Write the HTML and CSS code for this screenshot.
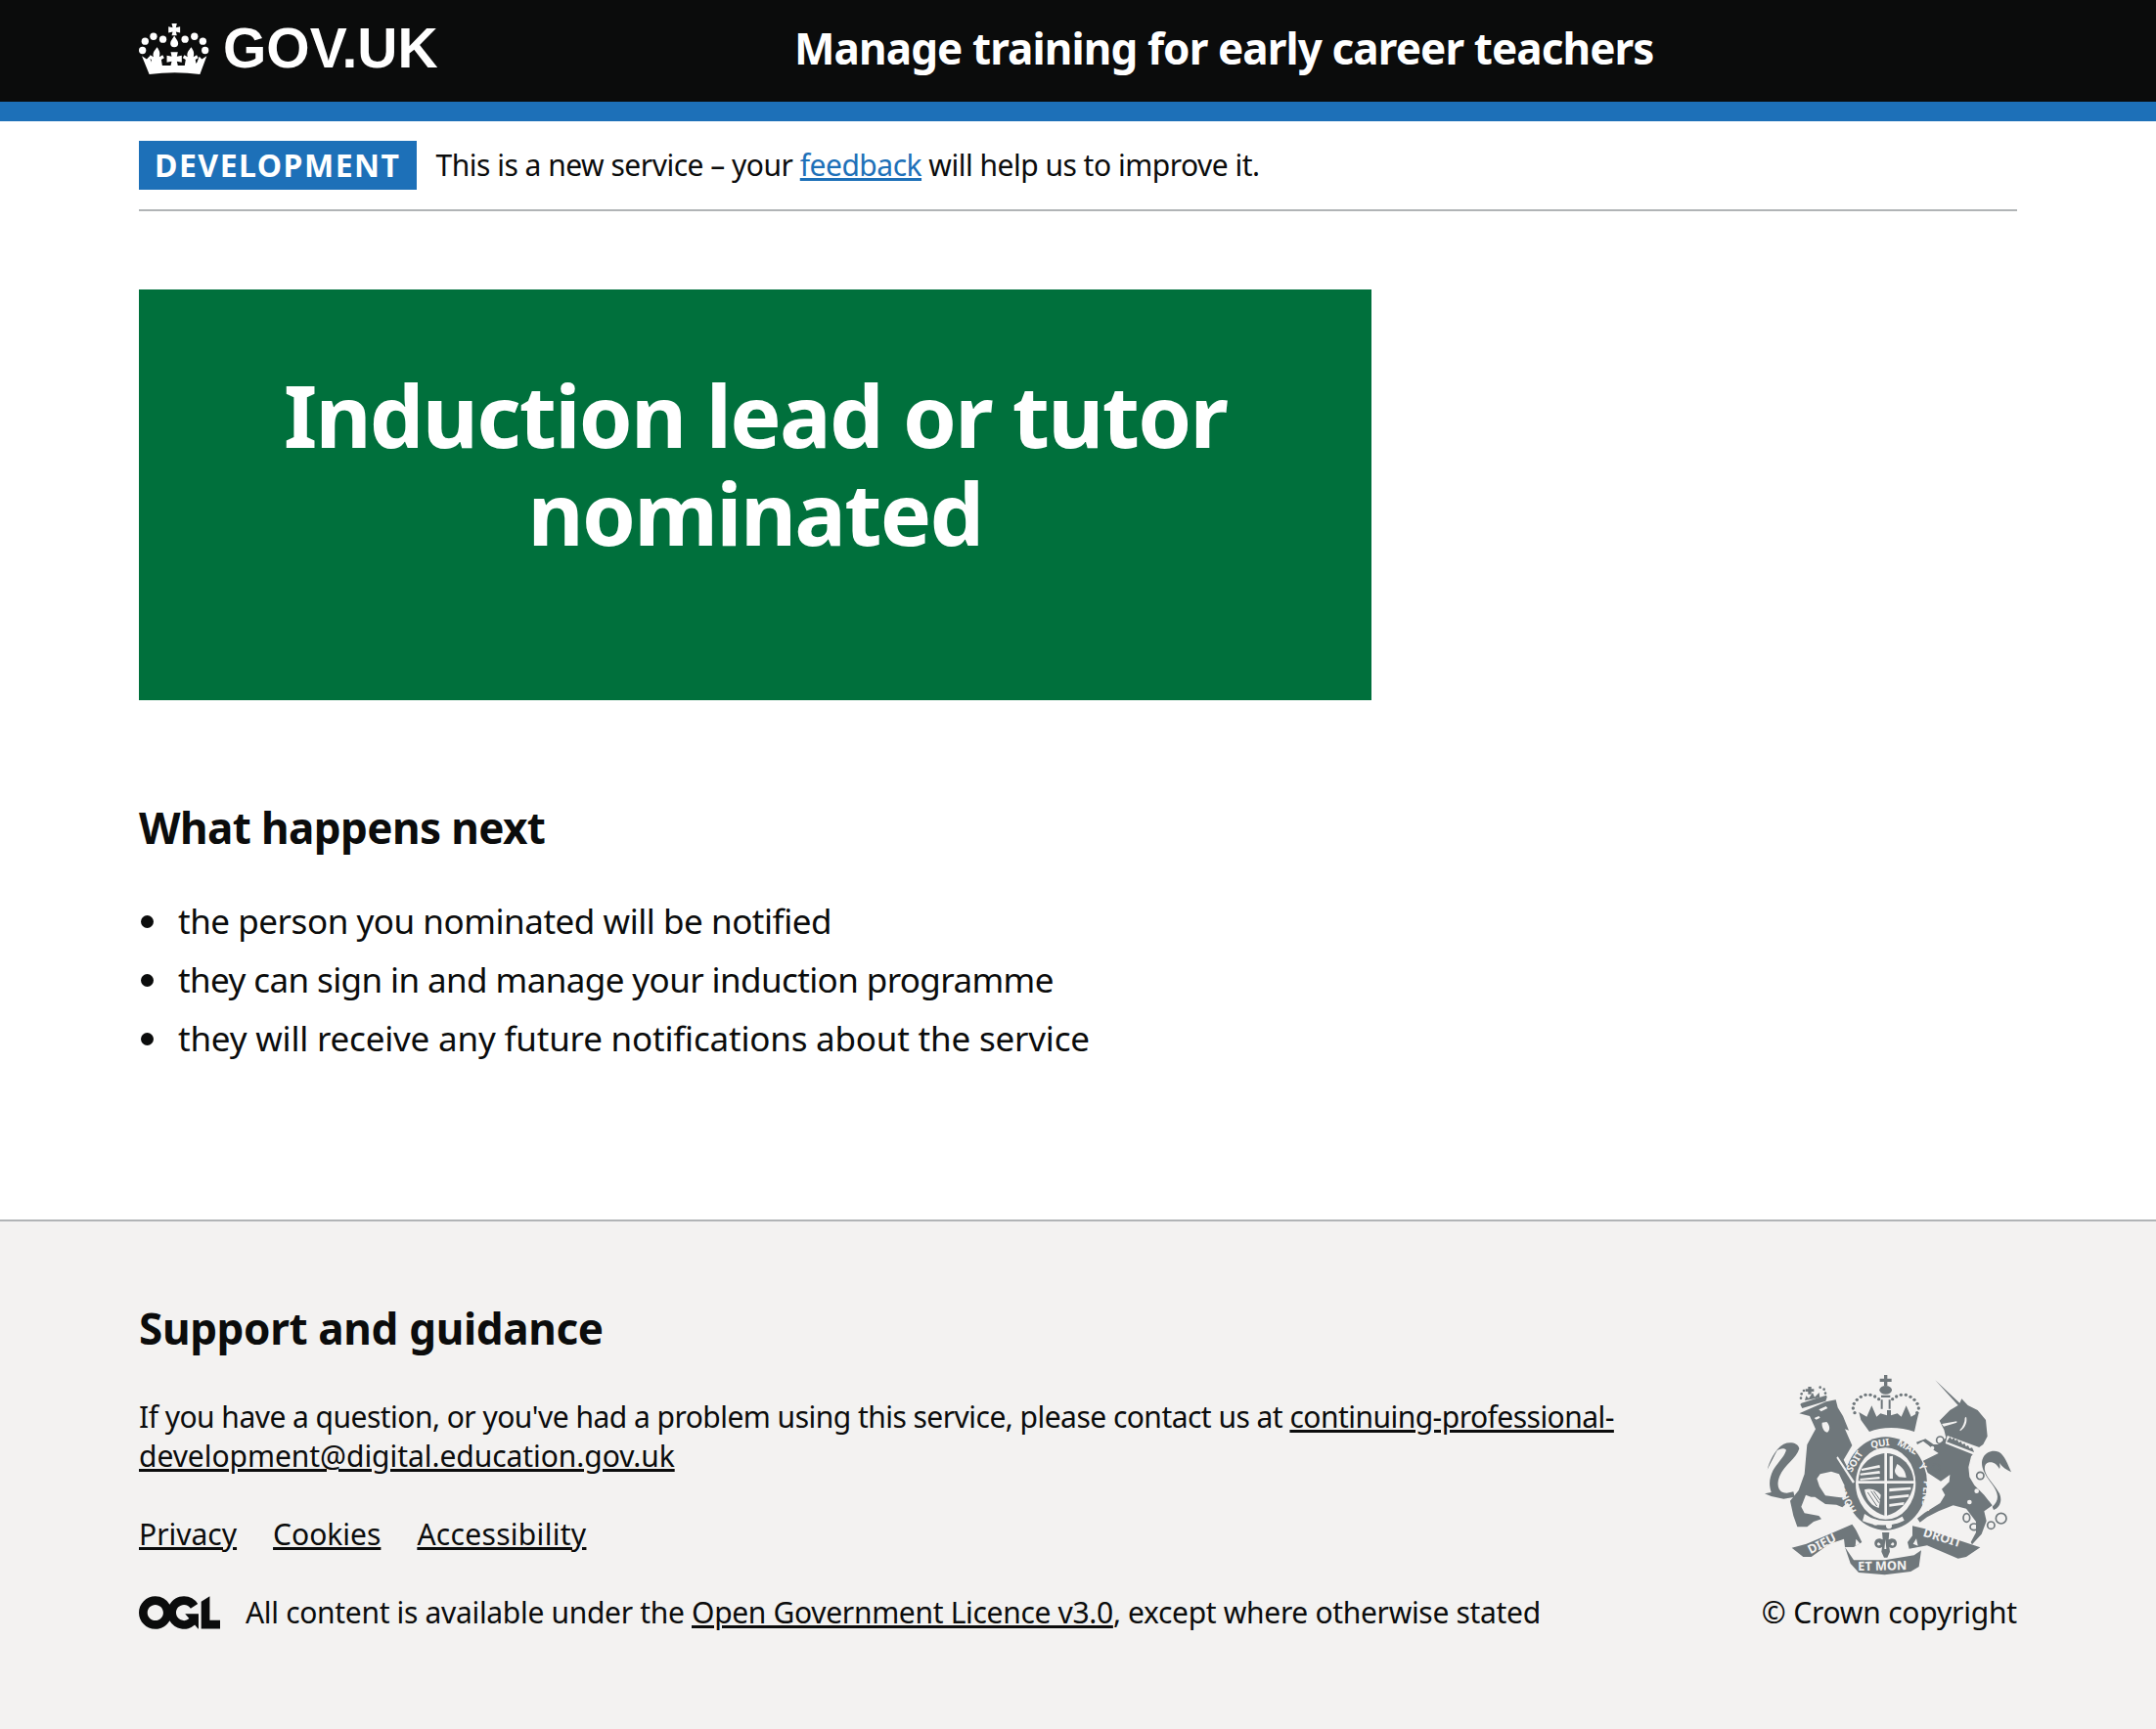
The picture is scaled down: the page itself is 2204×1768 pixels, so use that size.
FILE: index.html
```html
<!DOCTYPE html>
<html lang="en">
<head>
<meta charset="utf-8">
<title>Induction lead or tutor nominated</title>
<link rel="stylesheet" href="styles.css">
</head>
<body>
<header class="site-header">
  <div class="container header-row">
    <a class="logo" href="#">
      <svg class="crown" viewBox="36 35 220 170" aria-hidden="true">
        <defs>
          <path id="fleur" d="M92 113c6 9 11 16 7 30l10-6 5 9-9 6 3 18H72l3-18-9-6 5-9 10 6c-4-14 5-21 11-30z"/>
        </defs>
        <g fill="#fff">
          <circle cx="47" cy="123" r="11"/><circle cx="55" cy="95" r="11"/><circle cx="81" cy="80" r="11"/><circle cx="110" cy="89" r="11"/>
          <circle cx="178" cy="89" r="11"/><circle cx="207" cy="80" r="11"/><circle cx="233" cy="95" r="11"/><circle cx="240" cy="123" r="11"/>
          <path d="M137 40h16l-3 13 13-3v19l-13-3 3 11h-16l3-11-13 3V50l13 3z"/>
          <path d="M145 78c4 9 12 15 12 23a12 12 0 0 1-24 0c0-8 8-14 12-23z"/>
          <path d="M45 140l15 10 8-8 7 18 10 10h120l10-10 7-18 8 8 15-10-21 57q-77-11-156 0z"/>
          <use href="#fleur"/>
          <use href="#fleur" x="105"/>
          <path d="M134 128h22l-3 14 15-3v21l-15-3 3 13h-22l3-13-15 3v-21l15 3z"/>
        </g>
      </svg>
      <span class="logo-text">GOV.UK</span>
    </a>
    <a class="service-name" href="#">Manage training for early career teachers</a>
  </div>
</header>

<div class="container">
  <div class="phase-banner">
    <strong class="phase-tag">DEVELOPMENT</strong>
    <span class="phase-text">This is a new service – your <a class="link-blue" href="#">feedback</a> will help us to improve it.</span>
  </div>

  <main class="main">
    <div class="panel">
      <h1 class="panel-title">Induction lead or tutor nominated</h1>
    </div>
    <h2 class="heading-next">What happens next</h2>
    <ul class="next-list">
      <li>the person you nominated will be notified</li>
      <li>they can sign in and manage your induction programme</li>
      <li>they will receive any future notifications about the service</li>
    </ul>
  </main>
</div>

<footer class="site-footer">
  <div class="container footer-row">
    <div class="footer-main">
      <h2 class="footer-heading">Support and guidance</h2>
      <p class="footer-text">If you have a question, or you've had a problem using this service, please contact us at <a class="link-dark" href="#">continuing-professional-<span class="email-tail">development@digital.education.gov.uk</span></a></p>
      <ul class="footer-links">
        <li><a class="link-dark" href="#">Privacy</a></li>
        <li><a class="link-dark" href="#">Cookies</a></li>
        <li><a class="link-dark" href="#">Accessibility</a></li>
      </ul>
      <div class="licence">
        <svg class="ogl" viewBox="0 0 483.2 195.7" aria-hidden="true"><path fill="currentColor" d="M421.5 142.8V.1l-50.7 32.3v161.1h112.4v-50.7zm-122.3-9.6A47.12 47.12 0 0 1 221 97.8c0-26 21.1-47.1 47.1-47.1 16.7 0 31.4 8.7 39.7 21.8l42.7-27.2A97.63 97.63 0 0 0 268.1 0c-36.5 0-68.3 20.1-85.1 49.7A98 98 0 0 0 97.8 0C43.9 0 0 43.9 0 97.8s43.9 97.8 97.8 97.8c36.5 0 68.3-20.1 85.1-49.7a97.76 97.76 0 0 0 149.6 25.4l19.4 22.2h3v-87.8h-80l24.3 27.5zM97.8 145c-26 0-47.1-21.1-47.1-47.1s21.1-47.1 47.1-47.1 47.2 21 47.2 47S123.8 145 97.8 145"/></svg>
        <span>All content is available under the <a class="link-dark" href="#">Open Government Licence v3.0</a>, except where otherwise stated</span>
      </div>
    </div>
    <div class="footer-side">
      <svg class="arms" viewBox="60 60 786 636" aria-hidden="true">
        <g class="arms-dark">
          <!-- lion tail -->
          <path d="M80 362c6-22 22-62 50-78 20-8 44-4 48 14-8 30-46 50-60 84-12 30-4 52 22 52l20-4 4 16-34 6-38-8-20-8 20-4c-8-24-6-44 6-68 10-20 34-40 40-62-8-8-20-4-28 2-8 14-18 36-30 58z"/>
          <!-- lion body -->
          <path d="M178 190l82-36 30-6 6 24 16 26 18 44-12-4 22 50-26 44 30 62 8 30-14 4-24-22-14-30-24-8-34 8-10 14 8 24 18 28 34 4 34 4 2 12-18 16-18-8-34-2-32-22-12 0-16-6-14 36 10 20 44 8 8 10-24 8-20 16-30 0-12-34-10-46 26-32 18-50 4-46 4-44 26-48-18-40z"/>
          <!-- unicorn tail -->
          <path d="M770 476c24-20 18-42 0-68-18-24-32-44-32-66 0-26 26-44 52-34 16 8 28 38 38 62-16-8-28-16-36-28 2 8 2 14 0 18-8-14-18-22-32-20-12 2-16 14-12 28 8 24 30 42 44 68 10 22 0 44-18 50z"/>
          <!-- unicorn -->
          <path d="M595 88l75 70 6-13 19 20 30 15 25 30 5 50-13 25-17 12-20 25-8 33 3 30 15 25 30 30 25 32-25 18 7 30-15 40-29 32-4-7 16-30 0-33-30-40-40-10-45 18-35 18-22 16-8-12 22-17 48-30 15-25-10-18 23-22 2-22-28 20-40-26-14-37 47-23-15-10-15-14-17-13-18 10-3-7 28-10 25 17 15 0 23-20-6-25-14-28 32-32 25-15z"/>
          <!-- crown over shield -->
          <path d="M438 72h10v11h13v10h-13v12h-10V93h-13V83h13z"/>
          <ellipse cx="443" cy="118" rx="19" ry="13"/>
          <path d="M429 134h28v7h-28zM428 148h6v28h-6zM452 148h6v28h-6z"/>
          <path d="M367 210l-6-24 24 14 15-34 15 34 12-10 20 6v-16h12v16l20-6 12 10 15-34 15 34 24-14-6 24-8 36c-44-16-100-16-138 0z"/>
          <circle cx="348" cy="188" r="5"/><circle cx="343" cy="174" r="5"/><circle cx="346" cy="160" r="5"/><circle cx="355" cy="148" r="5"/><circle cx="367" cy="139" r="5"/><circle cx="381" cy="133" r="5"/><circle cx="396" cy="133" r="5"/><circle cx="410" cy="138" r="5"/><circle cx="422" cy="146" r="5"/>
          <circle cx="464" cy="146" r="5"/><circle cx="476" cy="138" r="5"/><circle cx="490" cy="133" r="5"/><circle cx="505" cy="133" r="5"/><circle cx="519" cy="139" r="5"/><circle cx="531" cy="148" r="5"/><circle cx="540" cy="160" r="5"/><circle cx="544" cy="174" r="5"/><circle cx="539" cy="188" r="5"/>
          <!-- lion crown -->
          <path d="M187 174l-6-12 4-4 76-24 2 6-4 12z"/>
          <path d="M205 108h10v7h8v8h-8v8h-10v-8h-8v-8h8z"/>
          <circle cx="185" cy="130" r="4"/><circle cx="192" cy="120" r="4"/><circle cx="242" cy="110" r="4"/><circle cx="254" cy="116" r="4"/><circle cx="258" cy="128" r="4"/><circle cx="183" cy="143" r="4"/>
          <path d="M195 150l4-14 8 8 12-18 6 14 14-14 2 16z"/>
          <!-- ribbons -->
          <path d="M155 602l45-12 60-25 80-35c12 14 22 38 30 55l-25 15-27 0-3-25-45 15-55 40-25 0z"/>
          <path d="M318 600l27 40 95 0 90-15 22-15-7 50-25 15-80 10-80-7-25-28z"/>
          <path d="M525 535l45 10 70 25 93 31-43 29-25 5-95-40-55 10-5-20 15-20z"/>
          <!-- fleur under shield -->
          <path fill-rule="evenodd" d="M432 555h22l-2 22 8-3c14-2 22 12 14 24-6 6-14 6-20 2l2 14-8 18h-10l-8-18 2-14c-6 4-14 4-20-2-8-12 0-26 14-24l8 3zM442 576l-3 30h6zM422 586c-5 0-7 6-3 9 3 1 7 0 9-3zM464 586c5 0 7 6 3 9-3 1-7 0-9-3z"/>
          <!-- garter ring -->
          <ellipse cx="443" cy="405" rx="127" ry="143"/>
        </g>
        <g class="arms-lines">
          <circle cx="610" cy="272" r="11"/><circle cx="598" cy="356" r="11"/><circle cx="733" cy="381" r="11"/>
          <ellipse cx="691" cy="510" rx="10" ry="13"/><ellipse cx="714" cy="538" rx="12" ry="10"/><circle cx="766" cy="533" r="11"/><circle cx="797" cy="512" r="16"/>
        </g>
        <g class="arms-light">
          <ellipse cx="443" cy="405" rx="92" ry="110"/>
          <circle cx="586" cy="296" r="6"/><circle cx="722" cy="428" r="7"/><circle cx="700" cy="462" r="7"/>
          <path d="M238 178l22-10 5 6-20 10zM224 204l14-6 4 5-12 6zM248 218l14-2c10 10 12 26 2 32-12-2-18-20-16-30z"/>
          <path d="M296 322l52 78-6 4-50-78z"/>
          <path d="M632 258l98 36-8 26-96-38z"/>
          <path d="M615 222l46-8 0 4-40 12zM690 200c4 16-2 32-18 44l-2-3c10-10 16-24 16-38z"/>
          <path d="M375 272c36-20 100-20 136 0l2-15c-38-18-100-18-138 0z"/>
          <path d="M378 498l20 12 18 6c16 4 44 4 58 0l20-10 6 12c-30 18-90 20-128 2z"/>
          <path d="M352 575l12 14-14 8zM537 574l-10 16 15 6z"/>
          <circle cx="412" cy="524" r="9"/><circle cx="453" cy="535" r="9"/>
        </g>
        <g class="arms-dark">
          <!-- unicorn collar teeth -->
          <path d="M640 262l6 8 6-6 4 9 7-3 4 9 7-3 4 9 7-3 4 9 7-3 4 9 8-2 4 8 2 6-84-32z"/>
          <!-- shield quarters -->
          <path d="M439 312v85h-80c2-26 8-42 24-58 14-14 34-24 56-27z"/>
          <path d="M447 312c22 2 42 12 58 28 14 16 22 34 24 57h-82z"/>
          <path d="M359 405h80v98c-38-10-72-48-80-98z"/>
          <path d="M447 405h82c-6 46-40 88-82 98z"/>
        </g>
        <g class="arms-light">
          <path d="M368 360l56-12 2 8-56 10zM364 374l60-8 2 8-60 6zM364 390l60-6 1 7-60 4z"/>
          <path d="M455 322l10-2 0 70-10 0zM478 345c14 8 26 20 28 42l-22-2c-8-6-16-14-12-24z"/>
          <path d="M454 420l66-4 0 8-66 6zM454 444l60-6 0 8-60 6zM454 468l46-6-2 8-44 6z"/>
          <path d="M378 424c16-6 38 0 50 16l-6 40c-22-6-38-24-44-56z"/>
        </g>
        <path class="arms-harp" d="M388 432l28 42M398 428l24 36M406 428l20 28"/>
        <g class="arms-text">
          <text class="arms-garter" transform="translate(354 490) rotate(-118)">HONI</text>
          <text class="arms-garter" transform="translate(338 372) rotate(-58)">SOIT</text>
          <text class="arms-garter" transform="translate(398 296) rotate(-8)">QUI</text>
          <text class="arms-garter" transform="translate(476 286) rotate(28)">MAL</text>
          <text class="arms-garter" transform="translate(542 350) rotate(58)">Y</text>
          <text class="arms-garter" transform="translate(560 396) rotate(94)">PENSE</text>
          <text transform="translate(212 622) rotate(-27)">DIEU</text>
          <text transform="translate(358 672) rotate(-1)">ET MON</text>
          <text transform="translate(556 566) rotate(17)">DROIT</text>
        </g>
      </svg>
      <span class="copyright">© Crown copyright</span>
    </div>
  </div>
</footer>
</body>
</html>
```
FILE: styles.css
```css
* { box-sizing: border-box; }
html, body { margin: 0; padding: 0; }
body {
  font-family: "Noto Sans", "Liberation Sans", sans-serif;
  color: #0b0c0c;
  background: #fff;
  min-height: 1768px;
  display: flex;
  flex-direction: column;
}
.container { width: 1920px; margin: 0 142px; }

.site-header { background: #0b0c0c; border-bottom: 20px solid #1d70b8; height: 124px; }
.header-row { display: flex; align-items: center; height: 100px; }
.logo { display: flex; align-items: center; gap: 13px; width: 670px; color: #fff; text-decoration: none; }
.crown { width: 73px; height: 57px; display: block; }
.logo-text { font-family: "Liberation Sans", sans-serif; font-weight: 700; font-size: 57px; line-height: 60px; padding-bottom: 2px; }
.service-name { color: #fff; font-weight: 700; font-size: 44px; letter-spacing: -.9px; line-height: 60px; padding-bottom: 3px; text-decoration: none; }

.phase-banner { display: flex; align-items: center; gap: 20px; padding: 20px 0; border-bottom: 2px solid #b1b4b6; height: 92px; }
.phase-tag { background: #1d70b8; color: #fff; font-size: 32px; font-weight: 700; letter-spacing: 1.5px; line-height: 50px; height: 50px; padding: 0 16px; }
.phase-text { font-size: 30px; line-height: 40px; letter-spacing: -.5px; }
.link-blue { color: #1d70b8; }
.link-dark { color: #0b0c0c; }

.main { padding: 80px 0 150px; }
.panel { width: 1260px; background: #00703c; color: #fff; padding: 78px 60px 142px; text-align: center; }
.panel-title { margin: 0; font-size: 88px; line-height: 100px; font-weight: 700; letter-spacing: -1.75px; }
.heading-next { margin: 100px 0 41px; font-size: 44px; line-height: 60px; font-weight: 700; letter-spacing: -.6px; }
.next-list { list-style: none; margin: 0; padding: 0 0 0 40px; font-size: 35px; line-height: 50px; }
.next-list li { position: relative; margin-bottom: 10px; letter-spacing: -.6px; }
.next-list li:nth-child(1) { letter-spacing: -.46px; }
.next-list li:nth-child(3) { letter-spacing: -.2px; }
.next-list li::before { content: ""; position: absolute; left: -38px; top: 19px; width: 13px; height: 13px; border-radius: 50%; background: #0b0c0c; }

.site-footer { flex: 1; background: #f3f2f1; border-top: 2px solid #b1b4b6; padding-top: 80px; }
.footer-row { display: flex; align-items: flex-end; gap: 60px; }
.footer-main { flex: 1; }
.footer-heading { margin: 0 0 42px; font-size: 44px; line-height: 58px; font-weight: 700; letter-spacing: -.35px; }
.footer-text { margin: 0 0 40px; font-size: 30px; line-height: 40px; letter-spacing: -.53px; }
.email-tail { letter-spacing: -.05px; }
.footer-links { display: flex; gap: 37px; list-style: none; margin: 0 0 40px; padding: 0; font-size: 30px; line-height: 40px; }
.footer-links li:last-child { letter-spacing: .3px; }
.licence { display: flex; align-items: center; gap: 26px; font-size: 30px; line-height: 40px; letter-spacing: -.32px; }
.ogl { width: 83px; height: 34px; display: block; color: #0b0c0c; }
.footer-side { width: 262px; display: flex; flex-direction: column; align-items: flex-end; gap: 15px; }
.arms { width: 262px; height: 212px; display: block; }
.arms-dark { fill: #6f777b; }
.arms-light { fill: #f3f2f1; }
.arms-lines { fill: none; stroke: #6f777b; stroke-width: 5; }
.arms-harp { fill: none; stroke: #6f777b; stroke-width: 3; }
.arms-text text { fill: #f3f2f1; font-family: "Noto Sans", sans-serif; font-weight: 700; font-size: 38px; }
.arms-text text.arms-garter { font-size: 30px; }
.copyright { font-size: 30px; line-height: 40px; letter-spacing: -.2px; white-space: nowrap; }
```
